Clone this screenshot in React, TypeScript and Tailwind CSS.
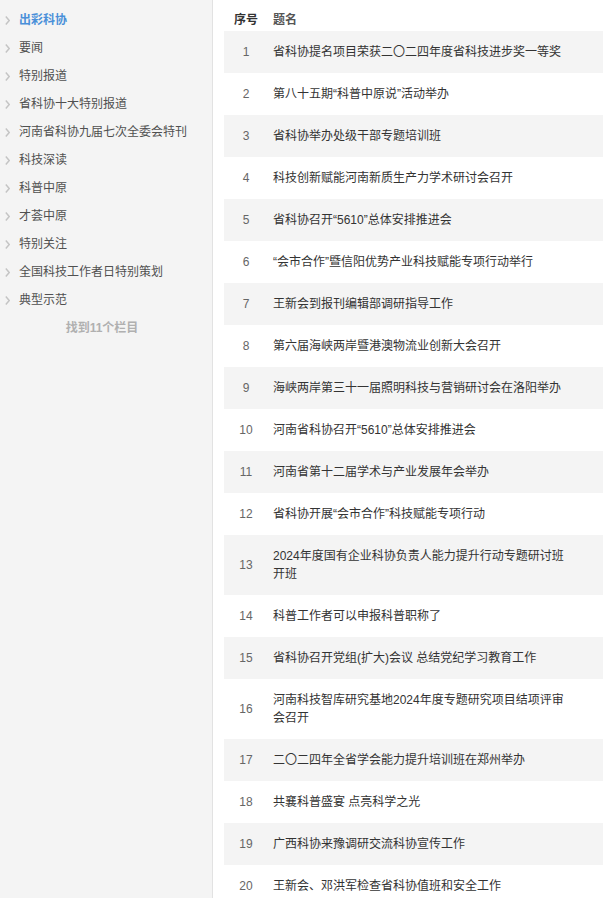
import React from 'react';

const columns: string[] = [
  '出彩科协',
  '要闻',
  '特别报道',
  '省科协十大特别报道',
  '河南省科协九届七次全委会特刊',
  '科技深读',
  '科普中原',
  '才荟中原',
  '特别关注',
  '全国科技工作者日特别策划',
  '典型示范',
];

const articles: string[] = [
  '省科协提名项目荣获二〇二四年度省科技进步奖一等奖',
  '第八十五期“科普中原说”活动举办',
  '省科协举办处级干部专题培训班',
  '科技创新赋能河南新质生产力学术研讨会召开',
  '省科协召开“5610”总体安排推进会',
  '“会市合作”暨信阳优势产业科技赋能专项行动举行',
  '王新会到报刊编辑部调研指导工作',
  '第六届海峡两岸暨港澳物流业创新大会召开',
  '海峡两岸第三十一届照明科技与营销研讨会在洛阳举办',
  '河南省科协召开“5610”总体安排推进会',
  '河南省第十二届学术与产业发展年会举办',
  '省科协开展“会市合作”科技赋能专项行动',
  '2024年度国有企业科协负责人能力提升行动专题研讨班开班',
  '科普工作者可以申报科普职称了',
  '省科协召开党组(扩大)会议 总结党纪学习教育工作',
  '河南科技智库研究基地2024年度专题研究项目结项评审会召开',
  '二〇二四年全省学会能力提升培训班在郑州举办',
  '共襄科普盛宴 点亮科学之光',
  '广西科协来豫调研交流科协宣传工作',
  '王新会、邓洪军检查省科协值班和安全工作',
];

const font = { fontFamily: '"Liberation Sans", "Noto Sans CJK SC", sans-serif' };

const Sidebar: React.FC = () => (
  <aside className="w-[213px] shrink-0 bg-[#f4f4f4] border-r border-[#e2e2e2] min-h-[898px] pt-[6px]">
    <ul>
      {columns.map((name, i) => (
        <li key={i} className="h-[28px] flex items-center text-[12px]">
          <svg className="ml-[5px] mr-[9px]" width="5" height="9" viewBox="0 0 5 9">
            <path d="M0.8 0.5 L4.2 4.5 L0.8 8.5" fill="none" stroke="#c4c4c4" strokeWidth="1.4" />
          </svg>
          <span className={i === 0 ? 'text-[#4a90d9] font-bold' : 'text-[#505050]'}>{name}</span>
        </li>
      ))}
    </ul>
    <div className="h-[28px] flex items-center justify-center pr-[8px] text-[12px] font-bold text-[#b0b0b0]">
      找到11个栏目
    </div>
  </aside>
);

const ArticleTable: React.FC = () => (
  <div className="flex-1 pl-[11px] pt-[9px]">
    <div className="flex h-[22px] items-center text-[12px] font-bold">
      <div className="w-[44px] text-center text-[#333]">序号</div>
      <div className="pl-[5px] text-[#555]">题名</div>
    </div>
    {articles.map((title, i) => (
      <div
        key={i}
        className={`flex items-center py-[12px] text-[12px] leading-[18px] ${i % 2 === 0 ? 'bg-[#f4f4f4]' : 'bg-white'}`}
      >
        <div className="w-[44px] shrink-0 text-center text-[#666]">{i + 1}</div>
        <div className="pl-[5px] w-[303px] text-[#333]">{title}</div>
      </div>
    ))}
  </div>
);

export default function App() {
  return (
    <div className="flex w-[603px] h-[898px] overflow-hidden bg-white" style={font}>
      <Sidebar />
      <ArticleTable />
    </div>
  );
}
